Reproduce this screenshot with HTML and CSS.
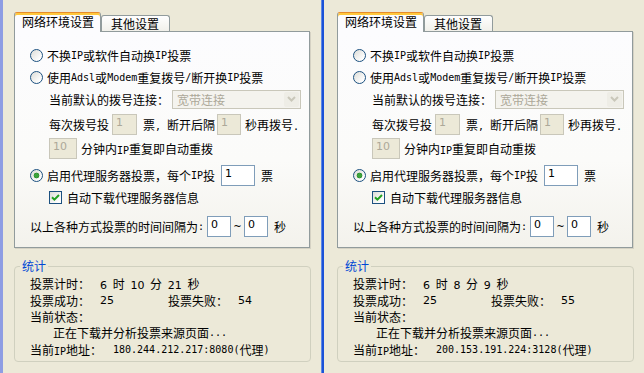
FILE: index.html
```html
<!DOCTYPE html>
<html lang="zh-CN">
<head>
    <meta charset="UTF-8">
    <meta name="viewport" content="width=device-width, initial-scale=1.0">
    <title>投票设置</title>
    <link rel="stylesheet" href="styles.css">
</head>
<body>
    <div class="screen">
        <div class="edge"></div>

        <div class="dlg dlg-left">
            <div class="tabs">
                <div class="tab tab-on">网络环境设置</div>
                <div class="tab tab-off">其他设置</div>
            </div>
            <div class="page">
                <label class="row"><input type="radio" name="mode-a">不换<span class="en">IP</span>或软件自动换<span class="en">IP</span>投票</label>
                <label class="row"><input type="radio" name="mode-a">使用<span class="en">Adsl</span>或<span class="en">Modem</span>重复拨号<span class="en">/</span>断开换<span class="en">IP</span>投票</label>
                <div class="row sub">当前默认的拨号连接：
                    <div class="combo"><span>宽带连接</span><span class="combo-btn"><svg width="9" height="6" viewBox="0 0 9 6"><path d="M1 1 L4.5 4.5 L8 1" fill="none" stroke="#c9c7ba" stroke-width="2"/></svg></span></div>
                </div>
                <div class="row sub row-dial">每次拨号投<input class="box w25 ml3" type="text" value="1" disabled><span class="ml6">票<span class="en">, </span>断开后隔</span><input class="box w24 ml2" type="text" value="1" disabled><span class="ml4">秒再拨号<span class="en">.</span></span></div>
                <div class="row sub row-retry"><input class="box w28" type="text" value="10" disabled><span class="ml4">分钟内<span class="en">IP</span>重复即自动重拨</span></div>
                <label class="row row-proxy"><input type="radio" name="mode-a" checked>启用代理服务器投票，每个<span class="en">IP</span>投<input class="box w34 ml6" type="text" value="1"><span class="ml6">票</span></label>
                <label class="row sub"><span class="check"><svg width="9" height="9" viewBox="0 0 9 9"><path d="M1 4.2 L3.4 6.6 L8 2" fill="none" stroke="#21a121" stroke-width="2"/></svg></span>自动下载代理服务器信息</label>
                <div class="row row-gap">以上各种方式投票的时间间隔为<span class="en">:</span><input class="box w24 ml3" type="text" value="0"><span class="tilde">~</span><input class="box w24" type="text" value="0"><span class="ml6">秒</span></div>
            </div>
            <fieldset class="stats">
                <legend>统计</legend>
                <div class="stat first"><span class="k">投票计时：</span><span class="val"><span class="num">6</span> 时 <span class="num">10</span> 分 <span class="num">21</span> 秒</span></div>
                <div class="stat"><span class="k">投票成功：</span><span class="k2 num">25</span><span class="k">投票失败：</span><span class="num">54</span></div>
                <div class="stat">当前状态：</div>
                <div class="stat indent">正在下载并分析投票来源页面<span class="en">...</span></div>
                <div class="stat last"><span class="k-ip">当前<span class="en">IP</span>地址：</span><span class="en">180.244.212.217:8080(</span>代理<span class="en">)</span></div>
            </fieldset>
        </div>

        <div class="divider"></div>

        <div class="dlg dlg-right">
            <div class="tabs">
                <div class="tab tab-on">网络环境设置</div>
                <div class="tab tab-off">其他设置</div>
            </div>
            <div class="page">
                <label class="row"><input type="radio" name="mode-b">不换<span class="en">IP</span>或软件自动换<span class="en">IP</span>投票</label>
                <label class="row"><input type="radio" name="mode-b">使用<span class="en">Adsl</span>或<span class="en">Modem</span>重复拨号<span class="en">/</span>断开换<span class="en">IP</span>投票</label>
                <div class="row sub">当前默认的拨号连接：
                    <div class="combo"><span>宽带连接</span><span class="combo-btn"><svg width="9" height="6" viewBox="0 0 9 6"><path d="M1 1 L4.5 4.5 L8 1" fill="none" stroke="#c9c7ba" stroke-width="2"/></svg></span></div>
                </div>
                <div class="row sub row-dial">每次拨号投<input class="box w25 ml3" type="text" value="1" disabled><span class="ml6">票<span class="en">, </span>断开后隔</span><input class="box w24 ml2" type="text" value="1" disabled><span class="ml4">秒再拨号<span class="en">.</span></span></div>
                <div class="row sub row-retry"><input class="box w28" type="text" value="10" disabled><span class="ml4">分钟内<span class="en">IP</span>重复即自动重拨</span></div>
                <label class="row row-proxy"><input type="radio" name="mode-b" checked>启用代理服务器投票，每个<span class="en">IP</span>投<input class="box w34 ml6" type="text" value="1"><span class="ml6">票</span></label>
                <label class="row sub"><span class="check"><svg width="9" height="9" viewBox="0 0 9 9"><path d="M1 4.2 L3.4 6.6 L8 2" fill="none" stroke="#21a121" stroke-width="2"/></svg></span>自动下载代理服务器信息</label>
                <div class="row row-gap">以上各种方式投票的时间间隔为<span class="en">:</span><input class="box w24 ml3" type="text" value="0"><span class="tilde">~</span><input class="box w24" type="text" value="0"><span class="ml6">秒</span></div>
            </div>
            <fieldset class="stats">
                <legend>统计</legend>
                <div class="stat first"><span class="k">投票计时：</span><span class="val"><span class="num">6</span> 时 <span class="num">8</span> 分 <span class="num">9</span> 秒</span></div>
                <div class="stat"><span class="k">投票成功：</span><span class="k2 num">25</span><span class="k">投票失败：</span><span class="num">55</span></div>
                <div class="stat">当前状态：</div>
                <div class="stat indent">正在下载并分析投票来源页面<span class="en">...</span></div>
                <div class="stat last"><span class="k-ip">当前<span class="en">IP</span>地址：</span><span class="en">200.153.191.224:3128(</span>代理<span class="en">)</span></div>
            </fieldset>
        </div>
    </div>
</body>
</html>
```

FILE: styles.css
```css
body {
    margin: 0;
    background-color: #ece9d8;
    font-family: "Noto Sans CJK SC", sans-serif;
    font-size: 12px;
    color: #000;
}

.screen {
    display: flex;
    width: 644px;
    height: 373px;
    overflow: hidden;
}

.edge {
    width: 3px;
    flex: none;
    background-color: #8e9de3;
}

.divider {
    width: 3px;
    flex: none;
    background: linear-gradient(to right, #5f88e4 0 1px, #1a52d8 1px);
}

.dlg {
    box-sizing: border-box;
    padding-top: 12px;
}

.dlg-left {
    width: 318px;
    padding-left: 11px;
}

.dlg-right {
    width: 320px;
    padding-left: 13px;
}

/* tabs */
.tabs {
    display: flex;
    align-items: flex-end;
    height: 19px;
}

.tab {
    box-sizing: border-box;
    border: 1px solid #919b9c;
    border-bottom: none;
    border-radius: 3px 3px 0 0;
    line-height: 14px;
    white-space: nowrap;
}

.tab-on {
    position: relative;
    z-index: 1;
    width: 87px;
    height: 20px;
    margin-bottom: -1px;
    padding: 2px 0 0 7px;
    border-top-color: #e68b2c;
    background-color: #fcfcfe;
    box-shadow: inset 0 2px 0 #ffc83c;
}

.tab-off {
    width: 69px;
    height: 16px;
    padding: 1px 0 0 9px;
    background: linear-gradient(#fefefe, #f1f0ea);
}

.page {
    box-sizing: border-box;
    width: 296px;
    height: 217px;
    padding: 12px 0 0 15px;
    border: 1px solid #919b9c;
    background: linear-gradient(#fcfcfe 0%, #fbfbf9 60%, #f3f2ec 100%);
    box-shadow: 1px 1px 0 #d5d2c4;
}

.row {
    display: flex;
    align-items: center;
    height: 22px;
    white-space: nowrap;
}

.row.sub {
    padding-left: 19px;
}

.row-dial {
    height: 24px;
    margin-top: 2px;
}

.row-retry {
    margin-top: 1px;
}

.row-proxy {
    margin-top: 5px;
}

.row-gap {
    margin-top: 7px;
}

.en {
    font-family: "DejaVu Sans Mono", monospace;
    font-size: 10px;
    white-space: pre;
}

.num {
    font-family: "DejaVu Sans", sans-serif;
    font-size: 11px;
}

.ml2 { margin-left: 2px; }
.ml3 { margin-left: 3px; }
.ml4 { margin-left: 4px; }
.ml6 { margin-left: 6px; }

.w24 { width: 24px; }
.w25 { width: 25px; }
.w28 { width: 28px; }
.w34 { width: 34px; }

/* radio & check */
input[type="radio"] {
    appearance: none;
    flex: none;
    width: 13px;
    height: 13px;
    margin: 0 4px 0 0;
    border: 1px solid #1c5180;
    border-radius: 50%;
    background: linear-gradient(135deg, #dcdcd7, #fefefe 80%);
}

input[type="radio"]:checked {
    background: radial-gradient(circle, #3ca33c 0 2px, #1f7f1f 2.5px, transparent 3.2px),
                linear-gradient(135deg, #dcdcd7, #fefefe 80%);
}

.check {
    display: flex;
    align-items: center;
    justify-content: center;
    box-sizing: border-box;
    flex: none;
    width: 13px;
    height: 13px;
    margin-right: 5px;
    border: 1px solid #1c5180;
    background: linear-gradient(135deg, #dcdcd7, #fefefe 80%);
}

/* edit boxes */
.box {
    box-sizing: border-box;
    flex: none;
    height: 21px;
    padding: 0 2px 4px 3px;
    border: 1px solid #7f9db9;
    border-radius: 0;
    background-color: #fff;
    font-family: "DejaVu Sans", sans-serif;
    font-size: 11px;
    color: #000;
    outline: none;
}

.box:disabled {
    border-color: #c9c7ba;
    background-color: #ece9d8;
    color: #aca899;
}

.tilde {
    width: 13px;
    text-align: center;
    font-family: "DejaVu Sans", sans-serif;
    font-size: 10px;
}

.combo {
    display: flex;
    align-items: center;
    box-sizing: border-box;
    width: 129px;
    height: 19px;
    margin-left: 3px;
    padding-left: 4px;
    border: 1px solid #c9c7ba;
    background-color: #f4f3ee;
    color: #aca899;
}

.combo-btn {
    display: flex;
    align-items: center;
    justify-content: center;
    width: 15px;
    height: 15px;
    margin: 0 1px 0 auto;
    border-radius: 2px;
    background-color: #eeede6;
}

/* stats group */
.stats {
    box-sizing: border-box;
    width: 297px;
    margin: 11px 0 0;
    padding: 2px 0 3px 15px;
    border: 1px solid #d0d0bf;
    border-radius: 4px;
}

.stats legend {
    margin-left: -10px;
    padding: 0 2px;
    line-height: 14px;
    color: #0046d5;
}

.stat {
    display: flex;
    align-items: center;
    height: 16px;
    white-space: nowrap;
}

.stat.first {
    height: 17px;
}

.stat.last {
    height: 18px;
}

.stat.indent {
    padding-left: 23px;
}

.stat .k {
    width: 70px;
}

.stat .k2 {
    width: 68px;
}

.stat .k-ip {
    width: 83px;
}

.stat .val {
    word-spacing: 3px;
}
```
